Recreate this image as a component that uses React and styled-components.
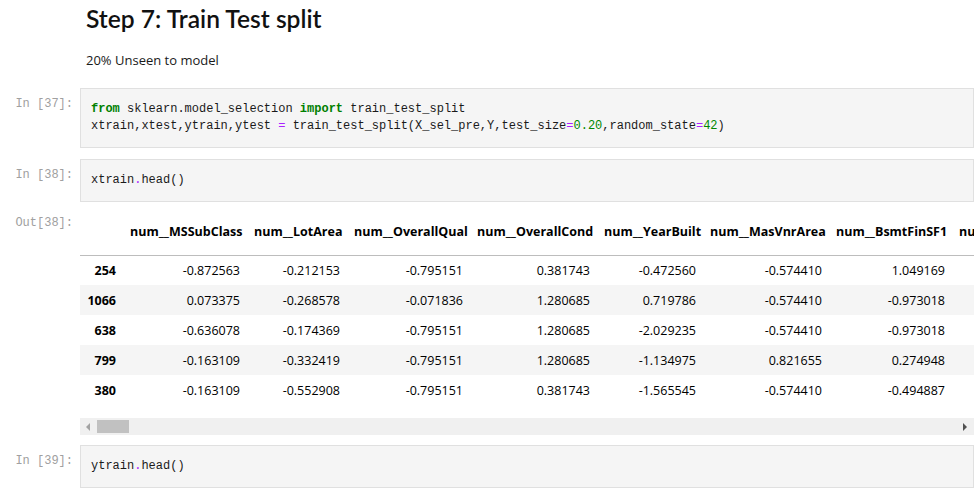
import React from "react";
import styled, { createGlobalStyle } from "styled-components";

const GlobalStyle = createGlobalStyle`
  html, body {
    margin: 0;
    padding: 0;
    background: #fff;
  }
  body {
    font-family: "Open Sans", "Noto Sans", sans-serif;
    color: #000;
  }
`;

const columns = [
  { name: "", width: 43 },
  { name: "num__MSSubClass", width: 124 },
  { name: "num__LotArea", width: 100 },
  { name: "num__OverallQual", width: 123 },
  { name: "num__OverallCond", width: 127 },
  { name: "num__YearBuilt", width: 106 },
  { name: "num__MasVnrArea", width: 126 },
  { name: "num__BsmtFinSF1", width: 123 },
  { name: "num__TotalBsmtSF", width: 128 },
];

const rows = [
  ["254", "-0.872563", "-0.212153", "-0.795151", "0.381743", "-0.472560", "-0.574410", "1.049169", "-0.360810"],
  ["1066", "0.073375", "-0.268578", "-0.071836", "1.280685", "0.719786", "-0.574410", "-0.973018", "-0.229218"],
  ["638", "-0.636078", "-0.174369", "-0.795151", "1.280685", "-2.029235", "-0.574410", "-0.973018", "-0.614880"],
  ["799", "-0.163109", "-0.332419", "-0.795151", "1.280685", "-1.134975", "0.821655", "0.274948", "-0.416180"],
  ["380", "-0.163109", "-0.552908", "-0.795151", "0.381743", "-1.565545", "-0.574410", "-0.494887", "-0.239920"],
];

const App = () => {
  return (
    <Notebook>
      <GlobalStyle />
      <Cell>
        <Prompt />
        <Markdown>
          <h2>Step 7: Train Test split</h2>
          <p>20% Unseen to model</p>
        </Markdown>
      </Cell>

      <Cell>
        <Prompt>In [37]:</Prompt>
        <CodeBox>
          <Line>
            <Kw>from</Kw> sklearn.model_selection <Kw>import</Kw> train_test_split
          </Line>
          <Line>
            xtrain,xtest,ytrain,ytest <Op>=</Op> train_test_split(X_sel_pre,Y,test_size<Op>=</Op>
            <Num>0.20</Num>,random_state<Op>=</Op>
            <Num>42</Num>)
          </Line>
        </CodeBox>
      </Cell>

      <Cell>
        <Prompt>In [38]:</Prompt>
        <CodeBox>
          <Line>
            xtrain<Op>.</Op>head()
          </Line>
        </CodeBox>
      </Cell>

      <Cell $out>
        <Prompt>Out[38]:</Prompt>
        <Output>
          <TableClip>
            <Table>
              <colgroup>
                {columns.map((c, i) => (
                  <col key={i} style={{ width: c.width }} />
                ))}
              </colgroup>
              <thead>
                <tr>
                  {columns.map((c, i) => (
                    <Th key={i}>{c.name}</Th>
                  ))}
                </tr>
              </thead>
              <tbody>
                {rows.map((r, i) => (
                  <Row key={r[0]} $striped={i % 2 === 1}>
                    <Index>{r[0]}</Index>
                    {r.slice(1).map((v, j) => (
                      <Td key={j}>{v}</Td>
                    ))}
                  </Row>
                ))}
              </tbody>
            </Table>
          </TableClip>
          <Scrollbar>
            <Arrow $dir="left" />
            <Thumb />
            <Arrow $dir="right" />
          </Scrollbar>
        </Output>
      </Cell>

      <Cell>
        <Prompt>In [39]:</Prompt>
        <CodeBox>
          <Line>
            ytrain<Op>.</Op>head()
          </Line>
        </CodeBox>
      </Cell>
    </Notebook>
  );
};

const Notebook = styled.div`
  width: 980px;
  height: 493px;
  overflow: hidden;
  display: flex;
  flex-direction: column;
  gap: 11px;
`;

const Cell = styled.div`
  display: flex;
  align-items: flex-start;
  margin-right: 6px;
  margin-top: ${(p) => (p.$out ? "-6px" : "0")};
`;

const Prompt = styled.div`
  flex: 0 0 80px;
  box-sizing: border-box;
  padding: 8px 7px 0 0;
  text-align: right;
  font-family: "Liberation Mono", "DejaVu Sans Mono", monospace;
  font-size: 12px;
  line-height: 17px;
  color: #a0a0a0;
  white-space: nowrap;
`;

const Markdown = styled.div`
  flex: 1;
  padding: 0 6px;

  h2 {
    margin: 4px 0 0;
    font-family: "Lato", "Open Sans", sans-serif;
    font-size: 24.6px;
    font-weight: 600;
    line-height: 30px;
    color: #111;
  }
  p {
    margin: 17px 0 8px;
    font-size: 13px;
    line-height: 18px;
    color: #1a1a1a;
  }
`;

const CodeBox = styled.div`
  flex: 1;
  min-width: 0;
  background: #f5f5f5;
  border: 1px solid #e0e0e0;
  padding: 12px 10px;
  font-family: "Liberation Mono", "DejaVu Sans Mono", monospace;
  font-size: 12px;
  line-height: 17px;
  color: #1a1a1a;
`;

const Line = styled.div`
  white-space: pre;
`;

const Kw = styled.span`
  color: #008000;
  font-weight: bold;
`;

const Op = styled.span`
  color: #aa22ff;
`;

const Num = styled.span`
  color: #008800;
`;

const Output = styled.div`
  flex: 1;
  min-width: 0;
  padding-top: 10px;
`;

const TableClip = styled.div`
  overflow: hidden;
  width: 100%;
`;

const Table = styled.table`
  border-collapse: collapse;
  table-layout: fixed;
  width: 1000px;
  font-size: 12.5px;
  color: #000;
`;

const Th = styled.th`
  height: 38px;
  box-sizing: border-box;
  padding: 6px 7px 0;
  vertical-align: top;
  text-align: right;
  font-weight: 700;
  line-height: 18px;
  white-space: nowrap;
  border-bottom: 1px solid #bdbdbd;
`;

const Row = styled.tr`
  background: ${(p) => (p.$striped ? "#f5f5f5" : "transparent")};
`;

const Td = styled.td`
  height: 30px;
  box-sizing: border-box;
  padding: 0 7px;
  text-align: right;
  vertical-align: middle;
  white-space: nowrap;
`;

const Index = styled(Td).attrs({ as: "th" })`
  font-weight: 700;
`;

const Scrollbar = styled.div`
  margin: 13px 0 -1px;
  height: 17px;
  background: #f0f0f0;
  display: flex;
  align-items: center;
  padding: 0 7px 0 6px;
`;

const Arrow = styled.div`
  width: 0;
  height: 0;
  border-top: 4px solid transparent;
  border-bottom: 4px solid transparent;
  ${(p) =>
    p.$dir === "left"
      ? "border-right: 4px solid #a3a3a3;"
      : "border-left: 4px solid #505050; margin-left: auto;"}
`;

const Thumb = styled.div`
  width: 32px;
  height: 13px;
  margin-left: 7px;
  background: #c1c1c1;
`;

export default App;
